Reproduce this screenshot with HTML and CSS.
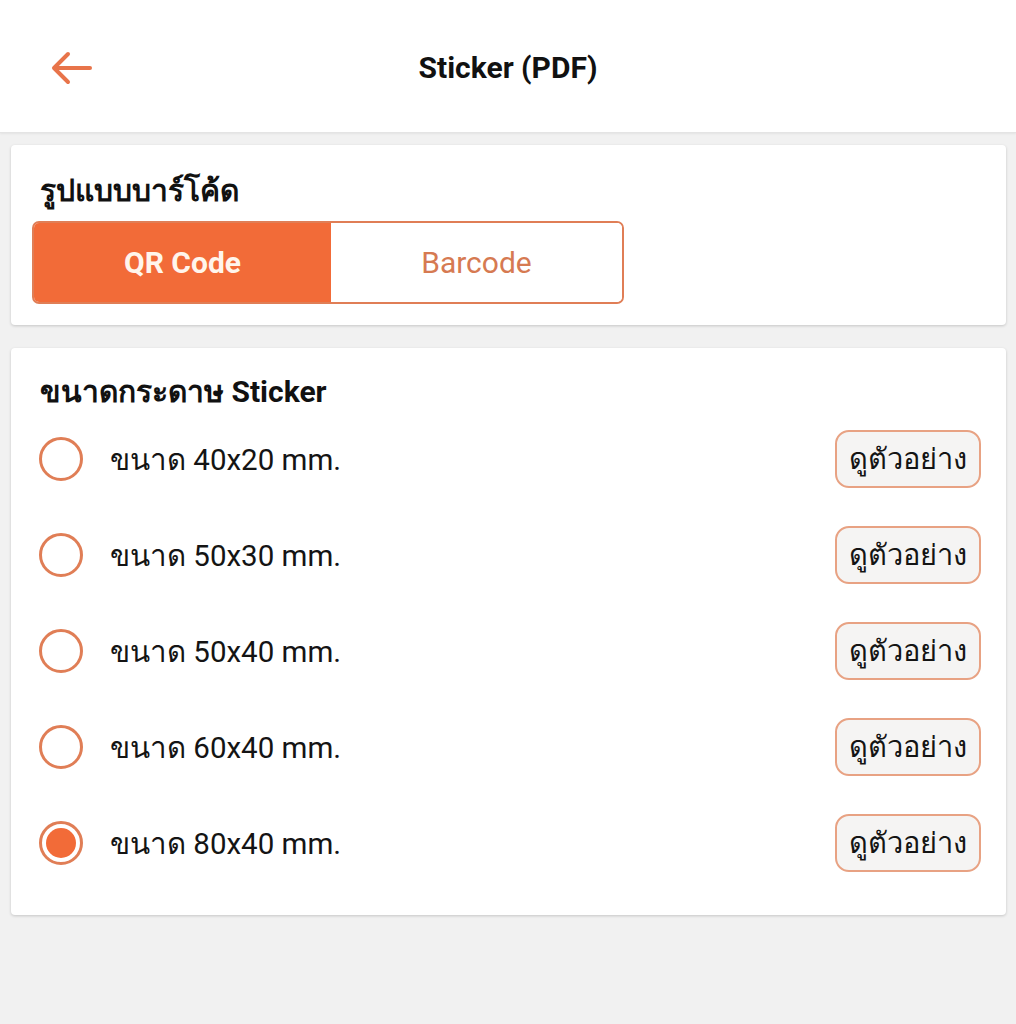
FILE: index.html
```html
<!DOCTYPE html>
<html lang="th">
<head>
<meta charset="utf-8">
<title>Sticker (PDF)</title>
<link rel="stylesheet" href="styles.css">
</head>
<body>
<header class="topbar">
  <button class="back" aria-label="back">
    <svg width="44" height="36" viewBox="0 0 44 36" fill="none" stroke="#e8744a" stroke-width="4" stroke-linecap="round" stroke-linejoin="round">
      <path d="M40 18H5"/>
      <path d="M18 4L4 18l14 14"/>
    </svg>
  </button>
  <h1 class="title">Sticker (PDF)</h1>
</header>

<main class="content">
  <section class="card card-format">
    <h2 class="card-title">รูปแบบบาร์โค้ด</h2>
    <div class="segmented">
      <button class="seg seg-active">QR Code</button>
      <button class="seg">Barcode</button>
    </div>
  </section>

  <section class="card card-size">
    <h2 class="card-title">ขนาดกระดาษ Sticker</h2>
    <ul class="options">
      <li class="option"><span class="radio"></span><span class="label">ขนาด 40x20 mm.</span><button class="preview">ดูตัวอย่าง</button></li>
      <li class="option"><span class="radio"></span><span class="label">ขนาด 50x30 mm.</span><button class="preview">ดูตัวอย่าง</button></li>
      <li class="option"><span class="radio"></span><span class="label">ขนาด 50x40 mm.</span><button class="preview">ดูตัวอย่าง</button></li>
      <li class="option"><span class="radio"></span><span class="label">ขนาด 60x40 mm.</span><button class="preview">ดูตัวอย่าง</button></li>
      <li class="option"><span class="radio radio-checked"></span><span class="label">ขนาด 80x40 mm.</span><button class="preview">ดูตัวอย่าง</button></li>
    </ul>
  </section>
</main>
</body>
</html>
```

FILE: styles.css
```css
* { box-sizing: border-box; }
html, body { margin: 0; padding: 0; }
body {
  background: #f1f1f1;
  font-family: Roboto, "Noto Sans", sans-serif;
  color: #141414;
  width: 1016px;
  min-height: 1024px;
}
.topbar {
  height: 133px;
  background: #fff;
  position: relative;
  display: flex;
  align-items: center;
  justify-content: center;
  border-bottom: 1px solid #e4e4e4;
  box-shadow: 0 1px 2px rgba(0,0,0,0.06);
}
.back {
  position: absolute;
  left: 50px;
  top: 50px;
  padding: 0;
  border: 0;
  background: none;
  display: flex;
}
.title {
  margin: 0;
  font-size: 30px;
  font-weight: 700;
  color: #111;
  padding-top: 3px;
}
.content {
  padding: 12px 10px 0 11px;
  display: flex;
  flex-direction: column;
  gap: 23px;
}
.card {
  background: #fff;
  border-radius: 4px;
  box-shadow: 0 1px 3px rgba(0,0,0,0.18);
}
.card-title {
  margin: 0;
  font-size: 30px;
  font-weight: 700;
  color: #111;
  padding-left: 8px;
}
.card-format {
  padding: 24px 21px 21px 21px;
  height: 180px;
}
.card-format .card-title {
  height: 44px;
  line-height: 44px;
  margin-bottom: 8px;
}
.segmented {
  display: flex;
  width: 592px;
  height: 83px;
  border: 2px solid #e07e56;
  border-radius: 7px;
  overflow: hidden;
}
.seg {
  flex: 1;
  border: 0;
  background: #fff;
  font-family: Roboto, sans-serif;
  font-size: 30px;
  color: #d67a52;
  padding: 0;
}
.seg-active {
  flex: 0 0 297px;
  background: #f26b38;
  color: #fff5ec;
  font-weight: 700;
}
.card-size {
  padding: 24px 25px 24px 28px;
}
.card-size .card-title {
  height: 39px;
  line-height: 39px;
  padding-left: 1px;
}
.options {
  list-style: none;
  margin: 0;
  padding: 0;
}
.option {
  height: 96px;
  display: flex;
  align-items: center;
}
.radio {
  width: 44px;
  height: 44px;
  border-radius: 50%;
  border: 3px solid #e07e56;
  flex: 0 0 auto;
  position: relative;
}
.radio-checked::after {
  content: "";
  position: absolute;
  left: 4px;
  top: 4px;
  right: 4px;
  bottom: 4px;
  border-radius: 50%;
  background: #f26b38;
}
.label {
  margin-left: 27px;
  font-size: 29.5px;
  flex: 1;
  color: #141414;
}
.preview {
  width: 146px;
  height: 58px;
  border: 2px solid #e8a283;
  border-radius: 14px;
  background: #f5f4f3;
  font-family: Roboto, sans-serif;
  font-size: 29px;
  color: #141414;
  padding: 0;
}
```
